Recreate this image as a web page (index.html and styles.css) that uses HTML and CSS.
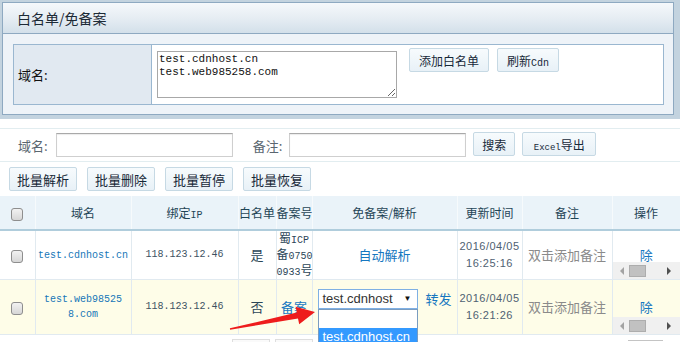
FILE: index.html
```html
<!DOCTYPE html>
<html lang="zh-CN">
<head>
    <meta charset="UTF-8">
    <title>白名单/免备案</title>
    <link rel="stylesheet" href="styles.css">
</head>
<body>
    <!-- 白名单面板 -->
    <div class="frame">
        <div class="panel">
            <div class="panel-title">白名单/免备案</div>
            <div class="panel-body">
                <table class="form-table">
                    <tr>
                        <th>域名:</th>
                        <td>
                            <div class="form-row">
                                <textarea class="domain-input">test.cdnhost.cn
test.web985258.com</textarea>
                                <button class="btn">添加白名单</button>
                                <button class="btn">刷新<span class="latin">Cdn</span></button>
                            </div>
                        </td>
                    </tr>
                </table>
            </div>
        </div>
    </div>

    <!-- 搜索 -->
    <div class="search-bar">
        <label class="search-label">域名:</label>
        <input class="search-input" type="text">
        <label class="search-label note-label">备注:</label>
        <input class="search-input" type="text">
        <button class="btn btn-search">搜索</button>
        <button class="btn btn-excel"><span class="latin">Excel</span>导出</button>
    </div>

    <div class="batch-bar">
        <button class="btn btn-batch">批量解析</button>
        <button class="btn btn-batch">批量删除</button>
        <button class="btn btn-batch">批量暂停</button>
        <button class="btn btn-batch">批量恢复</button>
    </div>

    <table class="grid">
        <colgroup>
            <col style="width:35px">
            <col style="width:96px">
            <col style="width:107px">
            <col style="width:38px">
            <col style="width:36px">
            <col style="width:145px">
            <col style="width:65px">
            <col style="width:90px">
            <col style="width:68px">
        </colgroup>
        <thead>
            <tr>
                <th><span class="check"></span></th>
                <th>域名</th>
                <th>绑定<span class="latin">IP</span></th>
                <th>白名单</th>
                <th>备案号</th>
                <th>免备案/解析</th>
                <th>更新时间</th>
                <th>备注</th>
                <th>操作</th>
            </tr>
        </thead>
        <tbody>
            <tr class="row-1">
                <td><span class="check"></span></td>
                <td class="domain">test.cdnhost.cn</td>
                <td class="ip">118.123.12.46</td>
                <td class="yes-no">是</td>
                <td class="icp">蜀<span class="latin">ICP</span><br>备<span class="num">0750</span><br><span class="num">0933</span>号</td>
                <td><a class="link">自动解析</a></td>
                <td class="time">2016/04/05<br>16:25:16</td>
                <td class="note">双击添加备注</td>
                <td class="op">
                    <a class="link">除</a>
                    <div class="hscroll">
                        <span class="arr arr-left"></span>
                        <span class="thumb"></span>
                        <span class="arr arr-right"></span>
                    </div>
                </td>
            </tr>
            <tr class="row-2">
                <td><span class="check"></span></td>
                <td class="domain">test.web98525<br>8.com</td>
                <td class="ip">118.123.12.46</td>
                <td class="yes-no">否</td>
                <td><a class="link">备案</a></td>
                <td class="resolve">
                    <div class="resolve-row">
                        <div class="select">
                            <span>test.cdnhost</span>
                            <span class="caret">▼</span>
                            <div class="select-list">
                                <div class="option"></div>
                                <div class="option selected">test.cdnhost.cn</div>
                            </div>
                        </div>
                        <a class="link">转发</a>
                    </div>
                </td>
                <td class="time">2016/04/05<br>16:21:26</td>
                <td class="note">双击添加备注</td>
                <td class="op">
                    <a class="link">除</a>
                    <div class="hscroll">
                        <span class="arr arr-left"></span>
                        <span class="thumb"></span>
                        <span class="arr arr-right"></span>
                    </div>
                </td>
            </tr>
        </tbody>
    </table>

    <div class="pager">
        <span class="page-box"></span>
        <span class="page-box"></span>
        <span class="page-line"></span>
    </div>

    <!-- 标注箭头 -->
    <svg class="mark-arrow" width="680" height="342" viewBox="0 0 680 342">
        <polygon points="229.9,328.3 296.8,312.6 295.6,306.7 315,312 299.2,324.3 298,318.4 230.1,329.7" fill="#ee1c1c"/>
    </svg>
</body>
</html>
```

FILE: styles.css
```css
* {
    margin: 0;
    padding: 0;
    box-sizing: border-box;
}

html, body {
    width: 680px;
    height: 342px;
    overflow: hidden;
}

body {
    position: relative;
    background: #fff;
    font-family: "Noto Sans CJK SC", "Liberation Sans", sans-serif;
    font-size: 12px;
    color: #2a3f4f;
}

.latin {
    font-family: "Liberation Mono", monospace;
    font-size: 10px;
}

/* 白名单面板 */
.frame {
    background: #c3d3df;
    padding: 2px 6px 4px 2px;
}

.panel {
    border: 1px solid #8ea9c1;
    background: #eef3f8;
}

.panel-title {
    height: 31px;
    line-height: 30px;
    padding-left: 14px;
    font-size: 14px;
    color: #1c2a36;
    background: linear-gradient(to bottom, #f5f8fb 0%, #e6edf3 50%, #d3e0ea 100%);
    border-bottom: 1px solid #8ea9c1;
}

.panel-body {
    padding: 10px 9px 9px 10px;
}

.form-table {
    width: 100%;
    border-collapse: collapse;
    border: 1px solid #9ab7d0;
    background: #fff;
}

.form-table th {
    width: 138px;
    background: #e1e9f1;
    border-right: 1px solid #9ab7d0;
    text-align: left;
    font-weight: normal;
    font-size: 13px;
    color: #111;
    padding-left: 4px;
}

.form-table td {
    padding: 6px 5px;
}

.form-row {
    display: flex;
    align-items: flex-start;
}

.domain-input {
    width: 240px;
    height: 47px;
    border: 1px solid #a8a8a8;
    border-radius: 0;
    padding: 1px;
    font-family: "Liberation Mono", monospace;
    font-size: 11px;
    line-height: 13px;
    color: #111;
    margin-right: 12px;
    outline: none;
}

.form-row .btn {
    margin-top: -3px;
    margin-right: 8px;
    padding: 0 9px;
}

.btn {
    height: 24px;
    border: 1px solid #c6d9e4;
    border-radius: 2px;
    background: linear-gradient(to bottom, #f7fbfd 0%, #e8f1f7 100%);
    font-family: "Noto Sans CJK SC", sans-serif;
    font-size: 12px;
    color: #172838;
    padding: 0 8px;
}

/* 搜索 */
.search-bar {
    margin-top: 9px;
    height: 34px;
    border-top: 1px solid #e2edf0;
    border-bottom: 1px solid #e2edf0;
    display: flex;
    align-items: center;
    padding-left: 18px;
}

.search-label {
    font-size: 13px;
    color: #5a6670;
    margin-right: 8px;
}

.note-label {
    margin-left: 13px;
    margin-right: 7px;
}

.search-input {
    width: 177px;
    height: 24px;
    border: 1px solid #cfcfcf;
    border-top-color: #a9a9a9;
    box-shadow: inset 0 1px 1px rgba(0, 0, 0, 0.08);
    margin-right: 7px;
}

.btn-search {
    width: 42px;
    margin-top: -2px;
    margin-right: 7px;
    padding: 0;
}

.btn-excel {
    width: 74px;
    margin-top: -2px;
    padding: 0;
}

.btn-excel .latin {
    font-size: 9px;
}

.batch-bar {
    display: flex;
    gap: 10px;
    padding: 5px 0 5px 9px;
}

.btn-batch {
    width: 68px;
    padding: 0;
    font-size: 13px;
}

/* 列表 */
.grid {
    width: 680px;
    border-collapse: collapse;
    table-layout: fixed;
}

.grid th {
    height: 34px;
    background: #eaf3f9;
    border-bottom: 2px solid #b0cddc;
    border-right: 1px solid #f6fafc;
    font-weight: normal;
    font-size: 12px;
    color: #1f4556;
    white-space: nowrap;
    padding: 0;
}

.grid td {
    border: 1px solid #e1eaf0;
    text-align: center;
    padding: 0;
    font-size: 12px;
    line-height: 16px;
}

.grid td:first-child {
    border-left: none;
}

.grid td:last-child {
    border-right: none;
}

.row-1 td {
    height: 46px;
}

.row-2 td {
    height: 55px;
    background: #fefde8;
}

.check {
    display: inline-block;
    width: 12px;
    height: 13px;
    border: 1px solid #8e8e8e;
    border-radius: 3px;
    background: linear-gradient(to bottom, #f2f2f2 0%, #d6d6d6 100%);
    vertical-align: middle;
}

.grid td.domain {
    font-family: "Liberation Mono", monospace;
    font-size: 10px;
    line-height: 15px;
    color: #1677b8;
    white-space: nowrap;
}

.grid td.ip {
    font-family: "Liberation Mono", monospace;
    font-size: 10px;
    color: #3d5262;
}

.grid td.yes-no {
    font-size: 13px;
    color: #2c4657;
}

.grid td.icp {
    line-height: 13px;
    color: #2c4657;
    white-space: nowrap;
    overflow: visible;
}

.icp .latin,
.icp .num {
    font-family: "Liberation Mono", monospace;
    font-size: 10px;
}

.link {
    color: #1677c0;
    font-size: 13px;
}

.grid td.time {
    font-family: "Liberation Sans", sans-serif;
    font-size: 11px;
    letter-spacing: 0.5px;
    line-height: 17px;
    color: #4f6172;
    white-space: nowrap;
}

.grid td.note {
    font-size: 13px;
    color: #8a8a8a;
}

.grid td.resolve {
    vertical-align: top;
    padding: 9px 0 0 5px;
}

.resolve-row {
    display: flex;
    align-items: center;
    gap: 8px;
}

.select {
    position: relative;
    width: 100px;
    height: 20px;
    border: 1px solid #7fb0e4;
    background: #fff;
    display: flex;
    align-items: center;
    justify-content: space-between;
    padding: 0 5px 0 4px;
    font-family: "Liberation Sans", sans-serif;
    font-size: 13px;
    line-height: 18px;
    color: #333;
}

.caret {
    font-size: 8px;
    color: #111;
}

.select-list {
    position: absolute;
    top: 19px;
    left: -1px;
    width: 100px;
    border: 1px solid #7a9cc0;
    background: #fff;
    text-align: left;
}

.option {
    height: 18px;
    line-height: 18px;
    padding-left: 4px;
}

.option.selected {
    background: #3399ff;
    color: #fff;
}

.grid td.op {
    position: relative;
}

.hscroll {
    position: absolute;
    left: 0;
    right: 0;
    bottom: 0;
    height: 17px;
    background: #f0f0f0;
}

.thumb {
    position: absolute;
    left: 16px;
    top: 3px;
    width: 17px;
    height: 12px;
    background: #c1c1c1;
    border: 1px solid #adadad;
}

.arr {
    position: absolute;
    top: 5px;
    width: 0;
    height: 0;
    border-top: 4px solid transparent;
    border-bottom: 4px solid transparent;
}

.arr-left {
    left: 7px;
    border-right: 4px solid #a3a3a3;
}

.arr-right {
    right: 9px;
    border-left: 4px solid #505050;
}

.pager {
    position: relative;
    height: 20px;
    margin-top: 4px;
}

.page-box {
    position: absolute;
    top: 0;
    width: 38px;
    height: 20px;
    border: 1px solid #dedede;
    background: #fafafa;
}

.page-box:nth-child(1) {
    left: 232px;
}

.page-box:nth-child(2) {
    left: 275px;
}

.page-line {
    position: absolute;
    left: 628px;
    top: 1px;
    width: 35px;
    height: 1px;
    background: #c4c4c4;
}

.mark-arrow {
    position: absolute;
    left: 0;
    top: 0;
    pointer-events: none;
}
```
